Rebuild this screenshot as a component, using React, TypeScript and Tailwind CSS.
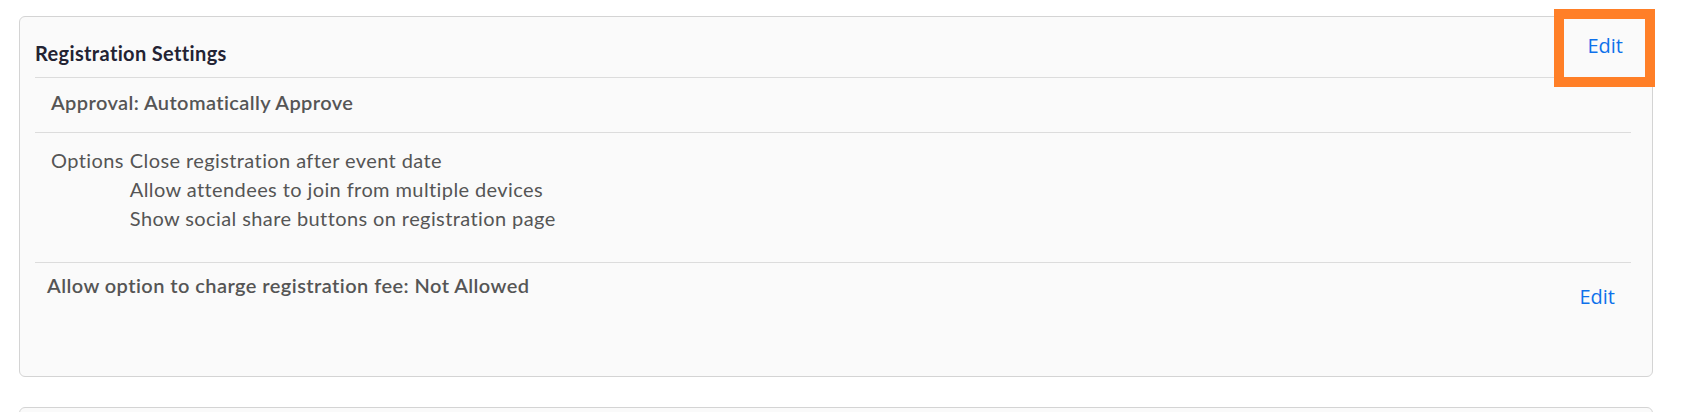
import React from "react";

export default function App() {
  return (
    <div className="w-[1697px] h-[412px] bg-white overflow-hidden pt-[16px]" style={{ fontFamily: "Lato, 'Noto Sans', sans-serif" }}>
      <div className="relative ml-[19px] w-[1634px] h-[361px] rounded-[6px] border border-[#d4d4d4] bg-[#fafafa] pl-[15px] pr-[21px]">
        <div className="flex justify-between h-[61px] border-b border-[#dcdcdc]">
          <h2 className="mt-[22px] text-[20px] leading-[29px] tracking-[0.35px] font-bold text-[#232333]">Registration Settings</h2>
          <a className="mt-[14px] mr-[8px] text-[20px] leading-[29px] text-[#0e71eb]" style={{ fontFamily: "'Open Sans', sans-serif" }}>Edit</a>
        </div>
        <div className="h-[55px] border-b border-[#dcdcdc] pl-[16px] pt-[10px]">
          <p className="text-[20px] leading-[29px] tracking-[0.4px] font-semibold text-[#555]">Approval: Automatically Approve</p>
        </div>
        <div className="h-[130px] border-b border-[#dcdcdc] pl-[16px] pt-[13px] flex text-[20px] leading-[29px] tracking-[0.4px] text-[#555]">
          <span className="mr-[6px]">Options</span>
          <div className="flex flex-col">
            <span>Close registration after event date</span>
            <span>Allow attendees to join from multiple devices</span>
            <span>Show social share buttons on registration page</span>
          </div>
        </div>
        <div className="flex justify-between pl-[12px] pt-[8px]">
          <p className="text-[20px] leading-[29px] tracking-[0.44px] font-semibold text-[#555]">Allow option to charge registration fee: Not Allowed</p>
          <a className="mt-[11px] mr-[16px] text-[20px] leading-[29px] text-[#0e71eb]" style={{ fontFamily: "'Open Sans', sans-serif" }}>Edit</a>
        </div>
        <div className="absolute -top-[8px] -right-[3px] w-[101px] h-[78px] border-[10px] border-[#ff7f27]"></div>
      </div>
      <div className="ml-[19px] mt-[30px] w-[1634px] h-[40px] rounded-[6px] border border-[#d4d4d4] bg-[#fafafa]"></div>
    </div>
  );
}
